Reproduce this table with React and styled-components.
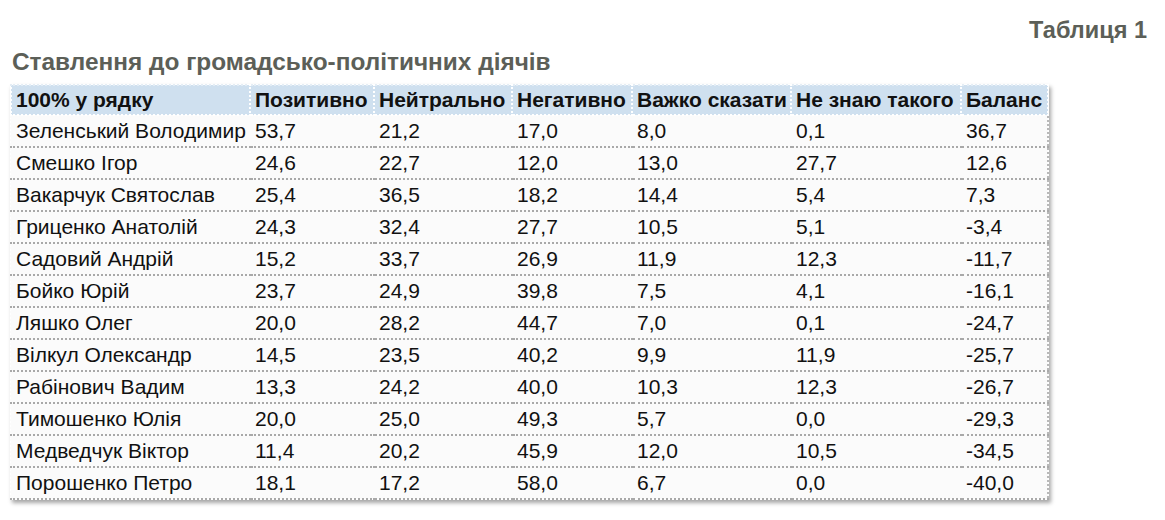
import React from 'react';
import styled, { createGlobalStyle } from 'styled-components';

const GlobalStyle = createGlobalStyle`
  html, body {
    margin: 0;
    padding: 0;
    background: #fff;
    font-family: "Liberation Sans", Arial, sans-serif;
  }
`;

const Page = styled.div`
  width: 1165px;
  height: 520px;
  padding: 16px 18px 0 10px;
  box-sizing: border-box;
`;

const TableNumber = styled.div`
  text-align: right;
  font-size: 23.5px;
  font-weight: bold;
  color: #5c5f58;
  line-height: 28px;
`;

const Caption = styled.h2`
  margin: 4px 0 8px 2px;
  font-size: 24.4px;
  font-weight: bold;
  color: #5c5f58;
  line-height: 28px;
`;

const Table = styled.table`
  border-collapse: collapse;
  border: 2px dotted #b9b9b9;
  box-shadow: 2px 3px 4px rgba(0, 0, 0, 0.35);
  font-size: 21px;
  color: #111;
`;

const HeadCell = styled.th`
  width: ${p => p.$w}px;
  height: 30px;
  padding: 0 1px 0 4px;
  box-sizing: border-box;
  background: #cfe0ef;
  border: 2px dotted #fff;
  border-top-color: #e4edf5;
  text-align: left;
  font-weight: bold;
  white-space: nowrap;
`;

const Row = styled.tr`
  background: #fbfbfb;
`;

const Cell = styled.td`
  height: 30px;
  padding: 0 1px 0 4px;
  border-bottom: 2px dotted #a9a9a9;
  border-left: 2px dotted #fbfbfb;
  white-space: nowrap;
`;

const columns = [
  ['100% у рядку', 239],
  ['Позитивно', 124],
  ['Нейтрально', 138],
  ['Негативно', 120],
  ['Важко сказати', 159],
  ['Не знаю такого', 170],
  ['Баланс', 87],
];

const rows = [
  ['Зеленський Володимир', '53,7', '21,2', '17,0', '8,0', '0,1', '36,7'],
  ['Смешко Ігор', '24,6', '22,7', '12,0', '13,0', '27,7', '12,6'],
  ['Вакарчук Святослав', '25,4', '36,5', '18,2', '14,4', '5,4', '7,3'],
  ['Гриценко Анатолій', '24,3', '32,4', '27,7', '10,5', '5,1', '-3,4'],
  ['Садовий Андрій', '15,2', '33,7', '26,9', '11,9', '12,3', '-11,7'],
  ['Бойко Юрій', '23,7', '24,9', '39,8', '7,5', '4,1', '-16,1'],
  ['Ляшко Олег', '20,0', '28,2', '44,7', '7,0', '0,1', '-24,7'],
  ['Вілкул Олександр', '14,5', '23,5', '40,2', '9,9', '11,9', '-25,7'],
  ['Рабінович Вадим', '13,3', '24,2', '40,0', '10,3', '12,3', '-26,7'],
  ['Тимошенко Юлія', '20,0', '25,0', '49,3', '5,7', '0,0', '-29,3'],
  ['Медведчук Віктор', '11,4', '20,2', '45,9', '12,0', '10,5', '-34,5'],
  ['Порошенко Петро', '18,1', '17,2', '58,0', '6,7', '0,0', '-40,0'],
];

export default function App() {
  return (
    <Page>
      <GlobalStyle />
      <TableNumber>Таблиця 1</TableNumber>
      <Caption>Ставлення до громадсько-політичних діячів</Caption>
      <Table>
        <thead>
          <tr>
            {columns.map(([title, w]) => (
              <HeadCell key={title} $w={w}>{title}</HeadCell>
            ))}
          </tr>
        </thead>
        <tbody>
          {rows.map(row => (
            <Row key={row[0]}>
              {row.map((value, i) => (
                <Cell key={i}>{value}</Cell>
              ))}
            </Row>
          ))}
        </tbody>
      </Table>
    </Page>
  );
}
